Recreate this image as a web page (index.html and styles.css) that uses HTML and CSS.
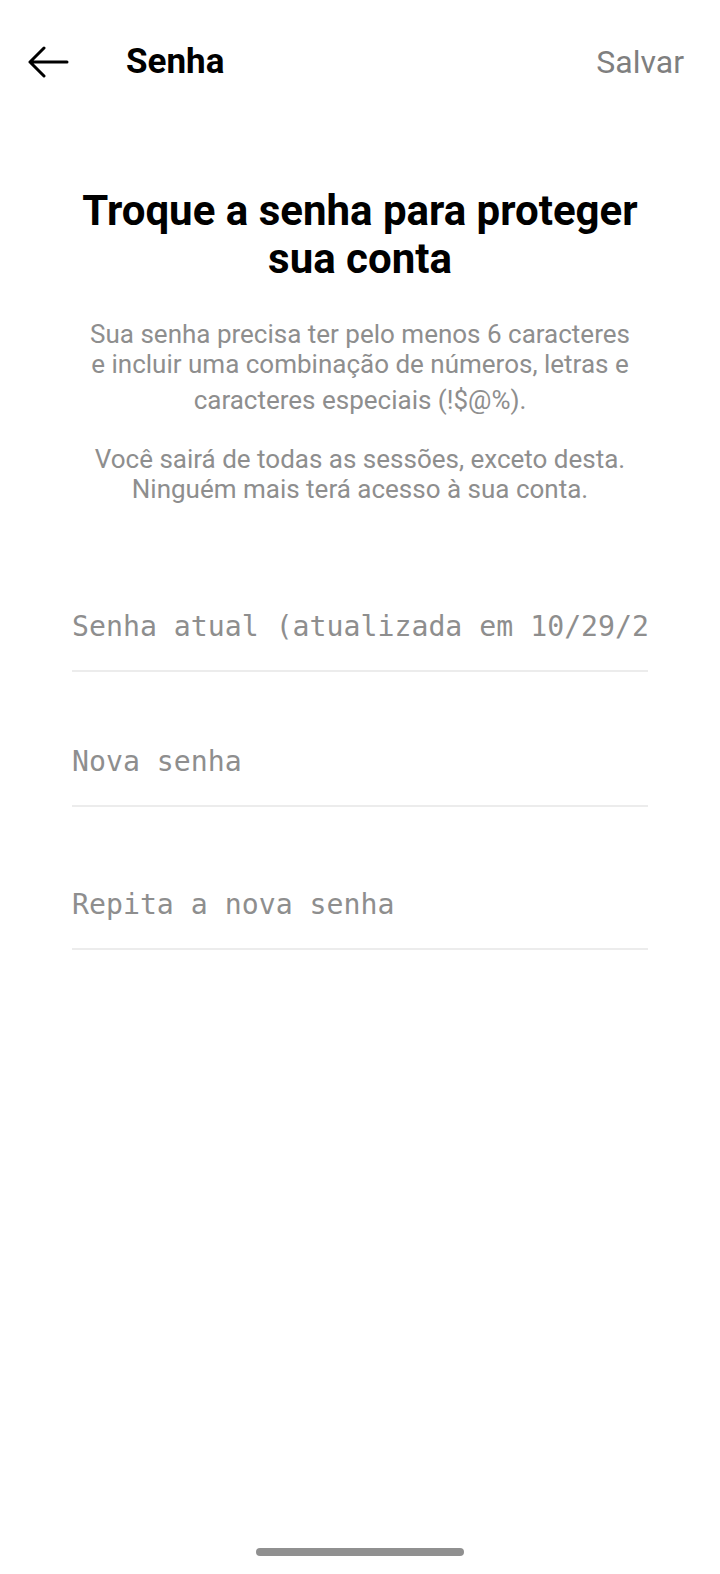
FILE: index.html
```html
<!DOCTYPE html>
<html lang="pt-BR">
<head>
  <meta charset="UTF-8">
  <meta name="viewport" content="width=device-width, initial-scale=1.0">
  <title>Senha</title>
  <link rel="stylesheet" href="styles.css">
</head>
<body>
  <div class="screen">
    <header class="topbar">
      <button class="back" type="button" aria-label="Voltar">
        <svg width="42" height="32" viewBox="0 0 42 32">
          <path d="M40 16H3M17 2L3 16l14 14" fill="none" stroke="#000" stroke-width="3" stroke-linecap="round" stroke-linejoin="round"/>
        </svg>
      </button>
      <h1 class="title">Senha</h1>
      <button class="save" type="button">Salvar</button>
    </header>

    <main class="content">
      <h2 class="heading">Troque a senha para proteger<br>sua conta</h2>
      <p class="info">
        Sua senha precisa ter pelo menos 6 caracteres<br>
        e incluir uma combinação de números, letras e
        <span class="info-last">caracteres especiais (!$@%).</span>
      </p>
      <p class="info info-second">
        Você sairá de todas as sessões, exceto desta.<br>
        Ninguém mais terá acesso à sua conta.
      </p>

      <form class="fields">
        <input type="password" class="field" placeholder="Senha atual (atualizada em 10/29/2023)">
        <input type="password" class="field" placeholder="Nova senha">
        <input type="password" class="field field-last" placeholder="Repita a nova senha">
      </form>
    </main>

    <div class="home-bar"></div>
  </div>
</body>
</html>
```

FILE: styles.css
```css
body {
  margin: 0;
  padding: 0;
  background: #fff;
  color: #000;
  font-family: Roboto, "Noto Sans", sans-serif;
}
.screen {
  min-height: 1574px;
  display: flex;
  flex-direction: column;
}
.topbar {
  height: 124px;
  display: flex;
  align-items: center;
  padding: 0 36px 0 27px;
}
.back {
  background: none;
  border: none;
  padding: 0;
  width: 42px;
  height: 32px;
  cursor: pointer;
}
.back svg {
  display: block;
}
.title {
  margin: -2px 0 0 57px;
  font-size: 35px;
  font-weight: bold;
  flex: 1;
}
.save {
  background: none;
  border: none;
  padding: 0;
  font-family: Roboto, sans-serif;
  font-size: 32px;
  color: #7f7f7f;
  cursor: pointer;
}
.content {
  display: flex;
  flex-direction: column;
  align-items: center;
}
.heading {
  margin: 63px 0 0;
  font-size: 42px;
  line-height: 48px;
  font-weight: bold;
  text-align: center;
}
.info {
  margin: 36px 0 0;
  font-size: 26px;
  line-height: 30px;
  color: #8e8e8e;
  text-align: center;
}
.info-last {
  display: block;
  margin-top: 6px;
}
.info-second {
  margin-top: 29px;
}
.fields {
  margin-top: 78px;
  width: 576px;
  display: flex;
  flex-direction: column;
  gap: 45px;
}
.field {
  display: block;
  width: 100%;
  height: 90px;
  box-sizing: border-box;
  padding: 0;
  border: none;
  border-bottom: 2px solid #ececec;
  font-family: "DejaVu Sans Mono", monospace;
  font-size: 28.2px;
  color: #333;
  background: transparent;
  outline: none;
}
.field::placeholder {
  color: #8e8e8e;
}
.field-last {
  margin-top: 8px;
}
.home-bar {
  margin: auto auto 18px;
  width: 208px;
  height: 8px;
  border-radius: 4px;
  background: #909090;
}
```
